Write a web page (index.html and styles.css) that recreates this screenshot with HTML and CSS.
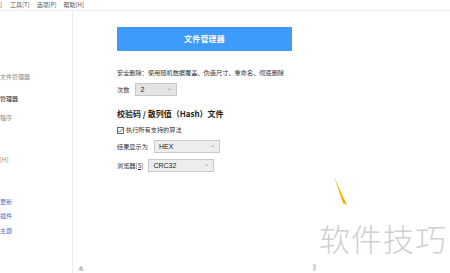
FILE: index.html
```html
<!DOCTYPE html>
<html lang="zh">
<head>
<meta charset="utf-8">
<link rel="stylesheet" href="styles.css">
</head>
<body>
<div class="page">
  <div class="menubar">
    <span class="menu cut">]</span>
    <span class="menu">工具[T]</span>
    <span class="menu">选项[P]</span>
    <span class="menu">帮助[H]</span>
  </div>
  <div class="main">
    <div class="sidebar">
      <div class="nav n1">文件管理器</div>
      <div class="nav n2 active">管理器</div>
      <div class="nav n3">程序</div>
      <div class="nav n4">[H]</div>
      <div class="nav n5 link">更新</div>
      <div class="nav n6 link">插件</div>
      <div class="nav n7 link">主题</div>
      <div class="grip">
        <svg width="8" height="6" viewBox="0 0 8 6"><path d="M1 5H7M4 1V5M2 3H6" stroke="#9a9a9a" stroke-width="0.8" fill="none"/></svg>
      </div>
    </div>
    <div class="content">
      <div class="banner">文件管理器</div>
      <div class="desc">安全删除：使用随机数据覆盖、伪造尺寸、重命名、彻底删除</div>
      <div class="row r1">
        <span class="label">次数</span>
        <span class="select s-small"><span>2</span><span class="chev">⌄</span></span>
      </div>
      <div class="heading">校验码 / 散列值（Hash）文件</div>
      <div class="check">
        <span class="box">
          <svg width="7" height="7" viewBox="0 0 7 7"><path d="M1.3 3.6L2.8 5.1L5.8 1.6" stroke="#444" stroke-width="0.8" fill="none"/></svg>
        </span>
        <span>执行所有支持的算法</span>
      </div>
      <div class="row r2">
        <span class="label">结果显示为</span>
        <span class="select s-wide"><span>HEX</span><span class="chev">⌄</span></span>
      </div>
      <div class="row r3">
        <span class="label">浏览器<u>[S]</u></span>
        <span class="select s-wide"><span>CRC32</span><span class="chev">⌄</span></span>
      </div>
    </div>
  </div>
  <svg class="stroke" width="20" height="34" viewBox="0 0 20 34"><path d="M1 1L10 27L14 29Z" fill="#f4b400"/></svg>
  <div class="watermark">软件技巧</div>
  <div class="tick"></div>
</div>
</body>
</html>
```
FILE: styles.css
```css
html, body {
  margin: 0;
  padding: 0;
  background: #fff;
}
body {
  font-family: "Noto Sans CJK SC", "Noto Sans", sans-serif;
  color: #333;
}
.page {
  position: relative;
  width: 450px;
  height: 273px;
  overflow: hidden;
}
.menubar {
  height: 10px;
  border-bottom: 1px solid #ececec;
  display: flex;
  align-items: center;
  gap: 7px;
  font-size: 6px;
  line-height: 8px;
  color: #555;
}
.menu.cut {
  width: 3px;
}
.main {
  display: flex;
  height: 262px;
}
.sidebar {
  width: 72px;
  border-right: 1px solid #ececec;
  display: flex;
  flex-direction: column;
  font-size: 6px;
  line-height: 8px;
  color: #888;
  position: relative;
}
.nav {
  height: 8px;
  white-space: nowrap;
}
.n1 { margin-top: 62px; }
.n2 { margin-top: 14px; color: #222; }
.n3 { margin-top: 11px; }
.n4 { margin-top: 34px; }
.n5 { margin-top: 34px; }
.n6 { margin-top: 6px; }
.n7 { margin-top: 7px; }
.link { color: #3a72d6; }
.grip {
  position: absolute;
  left: 77px;
  bottom: 2px;
  line-height: 0;
}
.content {
  padding-left: 44px;
  padding-top: 16px;
  display: flex;
  flex-direction: column;
  align-items: flex-start;
  font-size: 6.2px;
  line-height: 8px;
}
.banner {
  width: 175px;
  height: 24px;
  background: #3d9bfb;
  color: #fff;
  font-weight: bold;
  font-size: 8px;
  display: flex;
  align-items: center;
  justify-content: center;
  letter-spacing: 0.2px;
}
.desc {
  margin-top: 18px;
  color: #333;
}
.row {
  display: flex;
  align-items: center;
  gap: 6px;
}
.r1 { margin-top: 6px; }
.r2 { margin-top: 6px; }
.r3 { margin-top: 6px; gap: 5px; }
.select {
  height: 13px;
  box-sizing: border-box;
  border: 1px solid #c9c9c9;
  background: #ededed;
  display: flex;
  align-items: center;
  justify-content: space-between;
  padding: 0 4px 0 4px;
  color: #222;
  font-family: "Liberation Sans", "Noto Sans CJK SC", sans-serif;
  font-size: 7px;
}
.s-small { width: 42px; background: #e4e4e4; }
.s-wide { width: 66px; }
.chev {
  color: #888;
  font-size: 6px;
  line-height: 6px;
  margin-top: -3px;
}
.heading {
  margin-top: 13px;
  font-size: 8px;
  line-height: 10px;
  font-weight: bold;
  color: #222;
}
.check {
  margin-top: 7px;
  display: flex;
  align-items: center;
  gap: 2px;
}
.box {
  width: 7px;
  height: 7px;
  box-sizing: border-box;
  border: 1px solid #666;
  position: relative;
  line-height: 0;
}
.box svg {
  position: absolute;
  left: -1px;
  top: -1px;
}
.stroke {
  position: absolute;
  left: 333px;
  top: 176px;
}
.watermark {
  position: absolute;
  left: 319px;
  top: 220px;
  font-size: 31px;
  line-height: 36px;
  font-weight: 300;
  color: #d0d0d0;
  letter-spacing: 1px;
  white-space: nowrap;
}
.tick {
  position: absolute;
  left: 313px;
  top: 264px;
  width: 3px;
  height: 7px;
  background: #d8d8d8;
}
```
